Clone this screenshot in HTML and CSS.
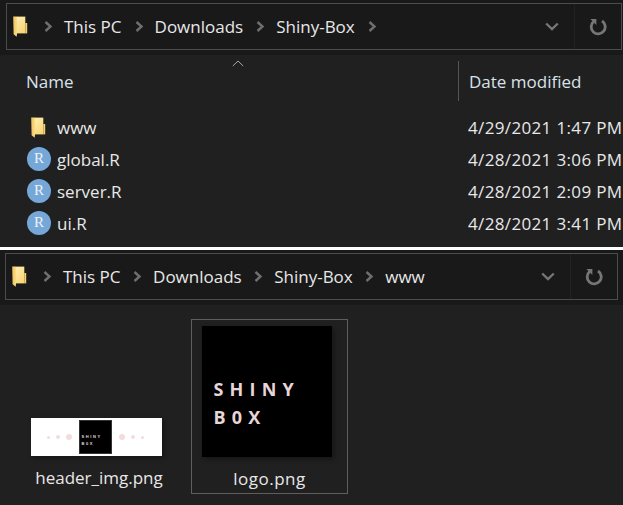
FILE: index.html
```html
<!DOCTYPE html>
<html lang="en">
<head>
<meta charset="utf-8">
<title>Shiny-Box</title>
<link rel="stylesheet" href="styles.css">
</head>
<body>
<svg class="defs" width="0" height="0" aria-hidden="true">
  <defs>
    <linearGradient id="fold" x1="0" y1="0" x2="0.6" y2="1">
      <stop offset="0" stop-color="#ffedb0"/>
      <stop offset="1" stop-color="#f9d778"/>
    </linearGradient>
    <linearGradient id="flap" x1="0" y1="0" x2="1" y2="0">
      <stop offset="0" stop-color="#f0c25e"/>
      <stop offset="1" stop-color="#fbdc85"/>
    </linearGradient>
    <symbol id="folder" viewBox="0 0 15 21">
      <path d="M4 0.6 H12.3 V17.4 H4 Z" fill="url(#fold)"/>
      <path d="M12.3 7 H14.2 V17.4 H12.3 Z" fill="#f8d272"/>
      <path d="M0.2 0.6 H4 V18 L3.6 20.8 L0.6 18.2 Z" fill="url(#flap)"/>
    </symbol>
    <symbol id="chev" viewBox="0 0 9 11">
      <path d="M1.5 1 L6.5 5.5 L1.5 10" fill="none" stroke="#6f6f6f" stroke-width="2.4"/>
    </symbol>
    <symbol id="down" viewBox="0 0 14 9">
      <path d="M1.2 1.5 L7 7 L12.8 1.5" fill="none" stroke="#767676" stroke-width="2.4"/>
    </symbol>
    <symbol id="refresh" viewBox="0 0 18 18">
      <path d="M4.6 3.6 A7 7 0 1 0 13 3" fill="none" stroke="#767676" stroke-width="2.8"/>
      <path d="M1.4 1 H7.4 V7 Z" fill="#767676"/>
    </symbol>
  </defs>
</svg>

<section class="window window-list">
  <div class="bar-wrap">
    <nav class="bar">
      <svg class="icon-folder"><use href="#folder"/></svg>
      <svg class="chev first"><use href="#chev"/></svg>
      <span class="crumb">This PC</span>
      <svg class="chev"><use href="#chev"/></svg>
      <span class="crumb">Downloads</span>
      <svg class="chev"><use href="#chev"/></svg>
      <span class="crumb">Shiny-Box</span>
      <svg class="chev"><use href="#chev"/></svg>
      <span class="bar-space"></span>
      <svg class="down"><use href="#down"/></svg>
      <span class="bar-refresh"><svg class="refresh"><use href="#refresh"/></svg></span>
    </nav>
  </div>
  <div class="head">
    <svg class="sort" viewBox="0 0 12 7" aria-hidden="true"><path d="M0.8 6 L6 1 L11.2 6" fill="none" stroke="#a8a8a8" stroke-width="1"/></svg>
    <span class="col-name">Name</span>
    <span class="col-date">Date modified</span>
  </div>
  <ul class="rows">
    <li class="row"><span class="slot"><svg class="row-folder"><use href="#folder"/></svg></span><span class="name">www</span><span class="date">4/29/2021 1:47 PM</span></li>
    <li class="row"><span class="slot"><span class="r-icon">R</span></span><span class="name">global.R</span><span class="date">4/28/2021 3:06 PM</span></li>
    <li class="row"><span class="slot"><span class="r-icon">R</span></span><span class="name">server.R</span><span class="date">4/28/2021 2:09 PM</span></li>
    <li class="row"><span class="slot"><span class="r-icon">R</span></span><span class="name">ui.R</span><span class="date">4/28/2021 3:41 PM</span></li>
  </ul>
</section>

<div class="rule"></div>

<section class="window window-icons">
  <div class="bar-wrap">
    <nav class="bar">
      <svg class="icon-folder"><use href="#folder"/></svg>
      <svg class="chev first"><use href="#chev"/></svg>
      <span class="crumb">This PC</span>
      <svg class="chev"><use href="#chev"/></svg>
      <span class="crumb">Downloads</span>
      <svg class="chev"><use href="#chev"/></svg>
      <span class="crumb">Shiny-Box</span>
      <svg class="chev"><use href="#chev"/></svg>
      <span class="crumb">www</span>
      <span class="bar-space"></span>
      <svg class="down"><use href="#down"/></svg>
      <span class="bar-refresh"><svg class="refresh"><use href="#refresh"/></svg></span>
    </nav>
  </div>
  <div class="tiles">
    <figure class="tile">
      <div class="thumb-wide">
        <span class="dots"><i class="d1"></i><i class="d2"></i><i class="d3"></i></span>
        <span class="mini-logo">SHINY<br>B0X</span>
        <span class="dots"><i class="d3"></i><i class="d2"></i><i class="d1"></i></span>
      </div>
      <figcaption>header_img.png</figcaption>
    </figure>
    <figure class="tile selected">
      <div class="thumb-square"><span class="logo-text">SHINY<br>B0X</span></div>
      <figcaption>logo.png</figcaption>
    </figure>
  </div>
</section>
</body>
</html>
```
FILE: styles.css
```css
* { box-sizing: border-box; }
html, body { margin: 0; padding: 0; }
body {
  width: 623px;
  height: 505px;
  overflow: hidden;
  background: #202020;
  font-family: "Open Sans", "Noto Sans", sans-serif;
  font-size: 17px;
  color: #e8e8e8;
}
.defs { position: absolute; }
.window-list { height: 247px; background: #202020; }
.window-icons { height: 255px; }
.rule { height: 3px; background: #fff; }

.bar-wrap { background: #191919; height: 55px; padding: 3px 1px 6px 6px; }
.window-icons .bar-wrap { height: 55px; padding: 3px 5px 6px 5px; }
.bar {
  height: 47px;
  border: 1px solid #4c4c4c;
  background: #191919;
  display: flex;
  align-items: center;
  padding-left: 6px;
}
.icon-folder { width: 15px; height: 21px; flex: none; }
.chev { width: 9px; height: 11px; flex: none; margin: 0 11px 0 13px; }
.window-icons .chev { margin-left: 12.5px; }
.chev.first, .window-icons .chev.first { margin: 0 11px 0 16px; }
.crumb { white-space: nowrap; }
.bar-space { flex: 1; }
.down { width: 14px; height: 9px; flex: none; margin-right: 15px; }
.bar-refresh {
  width: 47px; height: 45px; flex: none;
  border-left: 1px solid #222;
  display: flex; align-items: center; justify-content: center;
}
.refresh { width: 18px; height: 18px; }

.head { position: relative; display: flex; height: 51px; padding-top: 1px; align-items: center; }
.sort { position: absolute; left: 232px; top: 5px; width: 12px; height: 7px; }
.col-name { width: 458px; padding-left: 26px; color: #d8e2ea; }
.col-date { height: 40px; line-height: 42px; border-left: 1px solid #555; padding-left: 10px; color: #d8e2ea; }

.rows { list-style: none; margin: 5px 0 0; padding: 0; }
.row { display: flex; align-items: center; height: 32px; }
.slot { width: 57px; padding-left: 27px; display: flex; align-items: center; flex: none; }
.row-folder { width: 15px; height: 21px; margin-left: 4px; }
.r-icon {
  width: 24px; height: 24px; border-radius: 50%;
  background: #75a8d8; color: #f2f2f2;
  font-family: "Liberation Serif", serif;
  font-size: 15px; line-height: 22px; text-align: center;
}
.name { width: 411px; }
.date { white-space: nowrap; letter-spacing: .35px; }

.tiles { display: flex; align-items: flex-end; padding: 14px 0 0 19px; }
.tile { margin: 0; text-align: center; display: flex; flex-direction: column; align-items: center; }
.tile:first-child { width: 160px; padding-bottom: 4px; margin-right: 12px; }
.tile figcaption { white-space: nowrap; line-height: 24px; }
.tile:first-child figcaption { margin-top: 10px; }
.selected { width: 157px; height: 175px; border: 1px solid #5e5e5e; }
.selected figcaption { margin-top: 10px; letter-spacing: .5px; }

.thumb-wide {
  width: 131px; height: 38px; background: #fff;
  margin-left: -6px;
  padding-right: 2px;
  display: flex; align-items: center; justify-content: center;
  box-shadow: 2px 2px 5px rgba(0,0,0,.35);
}
.dots { display: flex; align-items: center; gap: 6px; }
.dots i { display: block; background: #f4dcdc; border-radius: 50%; }
.d1 { width: 3px; height: 3px; }
.d2 { width: 4px; height: 4px; }
.d3 { width: 6px; height: 6px; }
.mini-logo {
  width: 33px; height: 34px; margin: 0 7px;
  background: #000; color: #e6d6d6;
  border: 1px solid #333;
  font-family: "Liberation Sans", sans-serif;
  font-size: 4px; font-weight: 700; letter-spacing: 1.6px; line-height: 7px;
  padding: 12px 0 0 2px; text-align: left;
}
.thumb-square {
  width: 130px; height: 131px; margin: 6px 0 0 -6px;
  background: #000;
  box-shadow: 2px 2px 5px rgba(0,0,0,.35);
  padding: 49px 0 0 12px;
  text-align: left;
  flex: none;
}
.logo-text {
  display: block;
  color: #e8d6d6;
  font-family: "Open Sans", sans-serif;
  font-weight: 700;
  font-size: 18px;
  letter-spacing: 6.2px;
  line-height: 28px;
}
```
